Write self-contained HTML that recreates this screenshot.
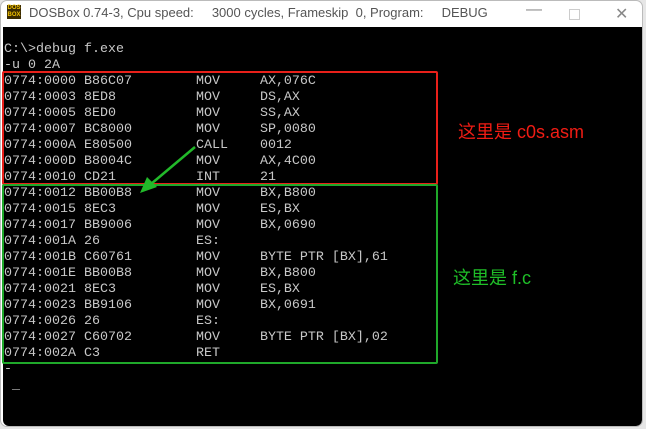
<!DOCTYPE html>
<html><head><meta charset="utf-8"><style>
body{margin:0;width:646px;height:429px;background:#e6e6e6;overflow:hidden;position:relative;font-family:"Liberation Sans","Noto Sans CJK SC",sans-serif}
.win{position:absolute;left:0;top:0;width:643px;height:427px;background:#fff;border:1px solid #bbb;border-radius:7px;box-sizing:border-box;overflow:hidden}
.title{position:absolute;left:28px;top:4px;font-size:13px;color:#555;white-space:pre}
.icon{position:absolute;left:6px;top:4px;width:14px;height:14px;background:#3a2a00;color:#f0c000;font:bold 6px/7px "Liberation Sans",sans-serif;text-align:center}
.term{position:absolute;left:2px;top:26px;width:639px;height:399px;background:#000;border-radius:0 0 6px 6px}
pre{position:absolute;left:3px;top:41px;margin:0;font-family:"Liberation Mono",monospace;font-size:13.33px;line-height:16px;color:#c8c8c8}
.ctl{position:absolute;top:2px;color:#888;font-size:16px}
</style></head><body>
<div class="win">
<div class="icon">DOS<br>BOX</div>
<div class="title">DOSBox 0.74-3, Cpu speed:     3000 cycles, Frameskip  0, Program:     DEBUG</div>
<div class="ctl" style="left:525px;top:0">—</div>
<div style="position:absolute;left:568px;top:8px;width:9px;height:9px;border:1px solid #ccc"></div>
<div class="ctl" style="left:614px;top:3px">✕</div>
<div class="term"></div>
<pre>C:\&gt;debug f.exe
-u 0 2A
0774:0000 B86C07        MOV     AX,076C
0774:0003 8ED8          MOV     DS,AX
0774:0005 8ED0          MOV     SS,AX
0774:0007 BC8000        MOV     SP,0080
0774:000A E80500        CALL    0012
0774:000D B8004C        MOV     AX,4C00
0774:0010 CD21          INT     21
0774:0012 BB00B8        MOV     BX,B800
0774:0015 8EC3          MOV     ES,BX
0774:0017 BB9006        MOV     BX,0690
0774:001A 26            ES:
0774:001B C60761        MOV     BYTE PTR [BX],61
0774:001E BB00B8        MOV     BX,B800
0774:0021 8EC3          MOV     ES,BX
0774:0023 BB9106        MOV     BX,0691
0774:0026 26            ES:
0774:0027 C60702        MOV     BYTE PTR [BX],02
0774:002A C3            RET
-
 _</pre>
<div style="position:absolute;left:1px;top:70px;width:436px;height:114px;border:2px solid #e8201a;border-radius:2px;box-sizing:border-box"></div>
<div style="position:absolute;left:1px;top:183px;width:436px;height:180px;border:2px solid #1fa82a;border-radius:2px;box-sizing:border-box"></div>
<div style="position:absolute;left:457px;top:117px;color:#f01c14;font-size:18px">这里是 c0s.asm</div>
<div style="position:absolute;left:452px;top:263px;color:#1fbf28;font-size:18px">这里是 f.c</div>
<svg style="position:absolute;left:0;top:0" width="646" height="429"><line x1="194" y1="146" x2="150" y2="183" stroke="#22b92a" stroke-width="2.5"/><polygon points="139,192 146,176 156,186" fill="#22b92a"/></svg>
</div>
</body></html>
